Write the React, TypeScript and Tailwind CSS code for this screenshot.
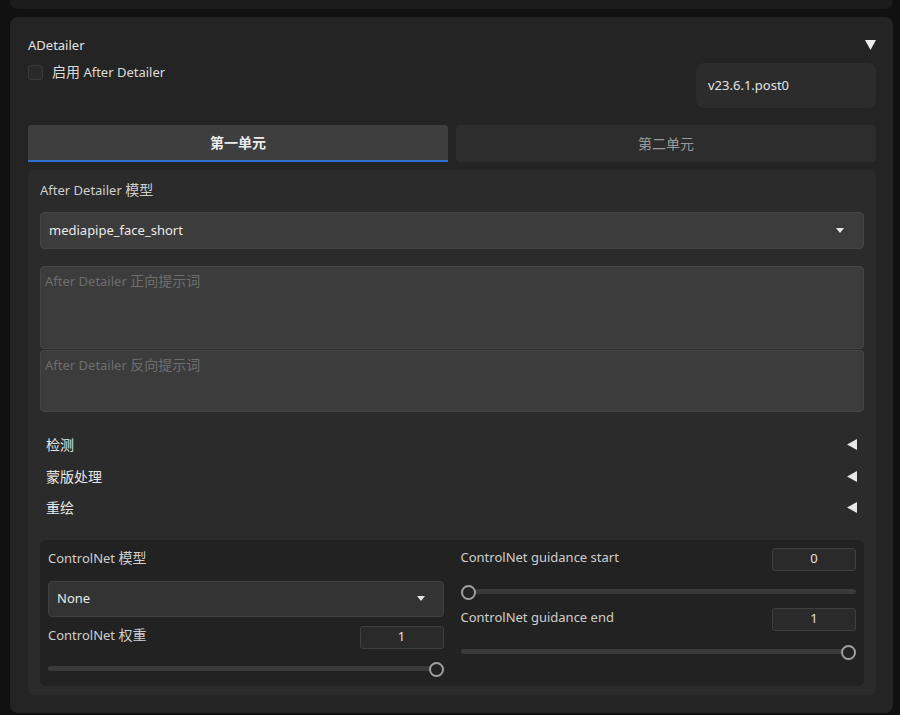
import React from "react";

const font = { fontFamily: '"Noto Sans", "Noto Sans CJK SC", sans-serif' };

function Z({ children }: { children: React.ReactNode }) {
  return <span className="text-[14px]">{children}</span>;
}

function LeftTri() {
  return (
    <svg width="10" height="11" viewBox="0 0 10 11">
      <polygon points="10,0 10,11 0,5.5" fill="#e6e6e6" />
    </svg>
  );
}

function DownSmall() {
  return (
    <svg width="8" height="5" viewBox="0 0 8 5">
      <polygon points="0,0 8,0 4,5" fill="#e6e6e6" />
    </svg>
  );
}

function Slider({ pos }: { pos: "left" | "right" }) {
  return (
    <div className="relative h-[14px] flex items-center">
      <div className="h-[5px] w-full rounded-full bg-[#3a3a3a]" />
      <div
        className={
          "absolute top-0 w-[15px] h-[15px] rounded-full border-2 border-[#a0a0a0] bg-[#222222] " +
          (pos === "left" ? "left-0" : "right-0")
        }
      />
    </div>
  );
}

function NumBox({ v }: { v: string }) {
  return (
    <div className="w-[84px] h-[23px] rounded-[3px] border border-[#3f3f3f] bg-[#2a2a2a] flex items-center justify-center text-[13px] text-[#e0e0e0]">
      {v}
    </div>
  );
}

export default function App() {
  return (
    <div className="w-[900px] h-[715px] bg-[#111111] overflow-hidden pl-[10px] pr-[7px] flex flex-col gap-[8px]" style={font}>
      <div className="h-[9px] shrink-0 rounded-b-[8px] bg-[#1c1c1c]" />
      <div className="shrink-0 rounded-[8px] bg-[#242424] pl-[18px] pr-[17px] pt-[18px] pb-[18px] flex flex-col">
        {/* header */}
        <div className="h-[20px] flex items-center justify-between">
          <span className="text-[13px] text-[#e4e4e4] mt-[1px]">ADetailer</span>
          <svg width="11" height="10" viewBox="0 0 11 10">
            <polygon points="0,0 11,0 5.5,10" fill="#ececec" />
          </svg>
        </div>
        <div className="mt-[8px] flex items-start justify-between">
          <div className="mt-[2px] flex items-center gap-[9px]">
            <div className="w-[15px] h-[15px] rounded-[3px] border border-[#3a3a3a] bg-[#2a2a2a]" />
            <span className="text-[13px] text-[#dcdcdc] leading-[14px] -mt-[1px]">
              <Z>启用</Z> After Detailer
            </span>
          </div>
          <div className="w-[180px] h-[45px] rounded-[8px] bg-[#2c2c2c] flex items-center pl-[12px] text-[13px] text-[#e4e4e4]">
            v23.6.1.post0
          </div>
        </div>
        {/* tabs */}
        <div className="mt-[17px] grid grid-cols-2 gap-[8px]">
          <div className="h-[37px] rounded-t-[4px] bg-[#3e3e3e] border-b-2 border-[#2f6fd0] flex items-center justify-center text-[14px] font-bold text-[#ececec]">
            第一单元
          </div>
          <div className="h-[37px] rounded-[4px] bg-[#2d2d2d] flex items-center justify-center text-[14px] text-[#9a9a9a]">
            第二单元
          </div>
        </div>
        {/* inner panel */}
        <div className="mt-[8px] rounded-[6px] bg-[#2b2b2b] px-[12px] pt-[10px] pb-[9px] flex flex-col">
          <div className="h-[20px] flex items-center text-[13px] text-[#cfcfcf]">
            <span>
              After Detailer <Z>模型</Z>
            </span>
          </div>
          <div className="mt-[12px] h-[37px] rounded-[4px] border border-[#454545] bg-[#3c3c3c] flex items-center justify-between pl-[8px] pr-[19px] text-[13px] text-[#eaeaea]">
            <span>mediapipe_face_short</span>
            <DownSmall />
          </div>
          <div className="mt-[17px] h-[83px] rounded-[4px] border border-[#464646] bg-[#3c3c3c] px-[4px] pt-[3px] text-[13px] text-[#6e6e6e] leading-[22px]">
            After Detailer <Z>正向提示词</Z>
          </div>
          <div className="mt-[1px] h-[62px] rounded-[4px] border border-[#464646] bg-[#3c3c3c] px-[4px] pt-[3px] text-[13px] text-[#6e6e6e] leading-[22px]">
            After Detailer <Z>反向提示词</Z>
          </div>
          <div className="mt-[17px] flex flex-col pl-[6px] pr-[7px]">
            {["检测", "蒙版处理", "重绘"].map((t) => (
              <div key={t} className="h-[31.5px] flex items-center justify-between text-[14px] text-[#e6e6e6]">
                <span>{t}</span>
                <LeftTri />
              </div>
            ))}
          </div>
          {/* ControlNet panel */}
          <div className="mt-[16px] rounded-[5px] bg-[#222222] p-[8px] pb-[10px] grid grid-cols-2 gap-x-[17px]">
            <div className="flex flex-col">
              <div className="h-[20px] flex items-center text-[13px] text-[#cfcfcf]">
                <span>
                  ControlNet <Z>模型</Z>
                </span>
              </div>
              <div className="mt-[13px] h-[36px] rounded-[4px] border border-[#404040] bg-[#333333] flex items-center justify-between pl-[8px] pr-[18px] text-[13px] text-[#eaeaea]">
                <span>None</span>
                <DownSmall />
              </div>
              <div className="mt-[9px] flex items-center justify-between">
                <span className="text-[13px] text-[#cfcfcf] -mt-[4px]">
                  ControlNet <Z>权重</Z>
                </span>
                <NumBox v="1" />
              </div>
              <div className="mt-[13px]">
                <Slider pos="right" />
              </div>
            </div>
            <div className="flex flex-col">
              <div className="flex items-center justify-between">
                <span className="text-[13px] text-[#cfcfcf] -mt-[3px]">ControlNet guidance start</span>
                <NumBox v="0" />
              </div>
              <div className="mt-[14px]">
                <Slider pos="left" />
              </div>
              <div className="mt-[9px] flex items-center justify-between">
                <span className="text-[13px] text-[#cfcfcf] -mt-[3px]">ControlNet guidance end</span>
                <NumBox v="1" />
              </div>
              <div className="mt-[14px]">
                <Slider pos="right" />
              </div>
            </div>
          </div>
        </div>
      </div>
    </div>
  );
}
